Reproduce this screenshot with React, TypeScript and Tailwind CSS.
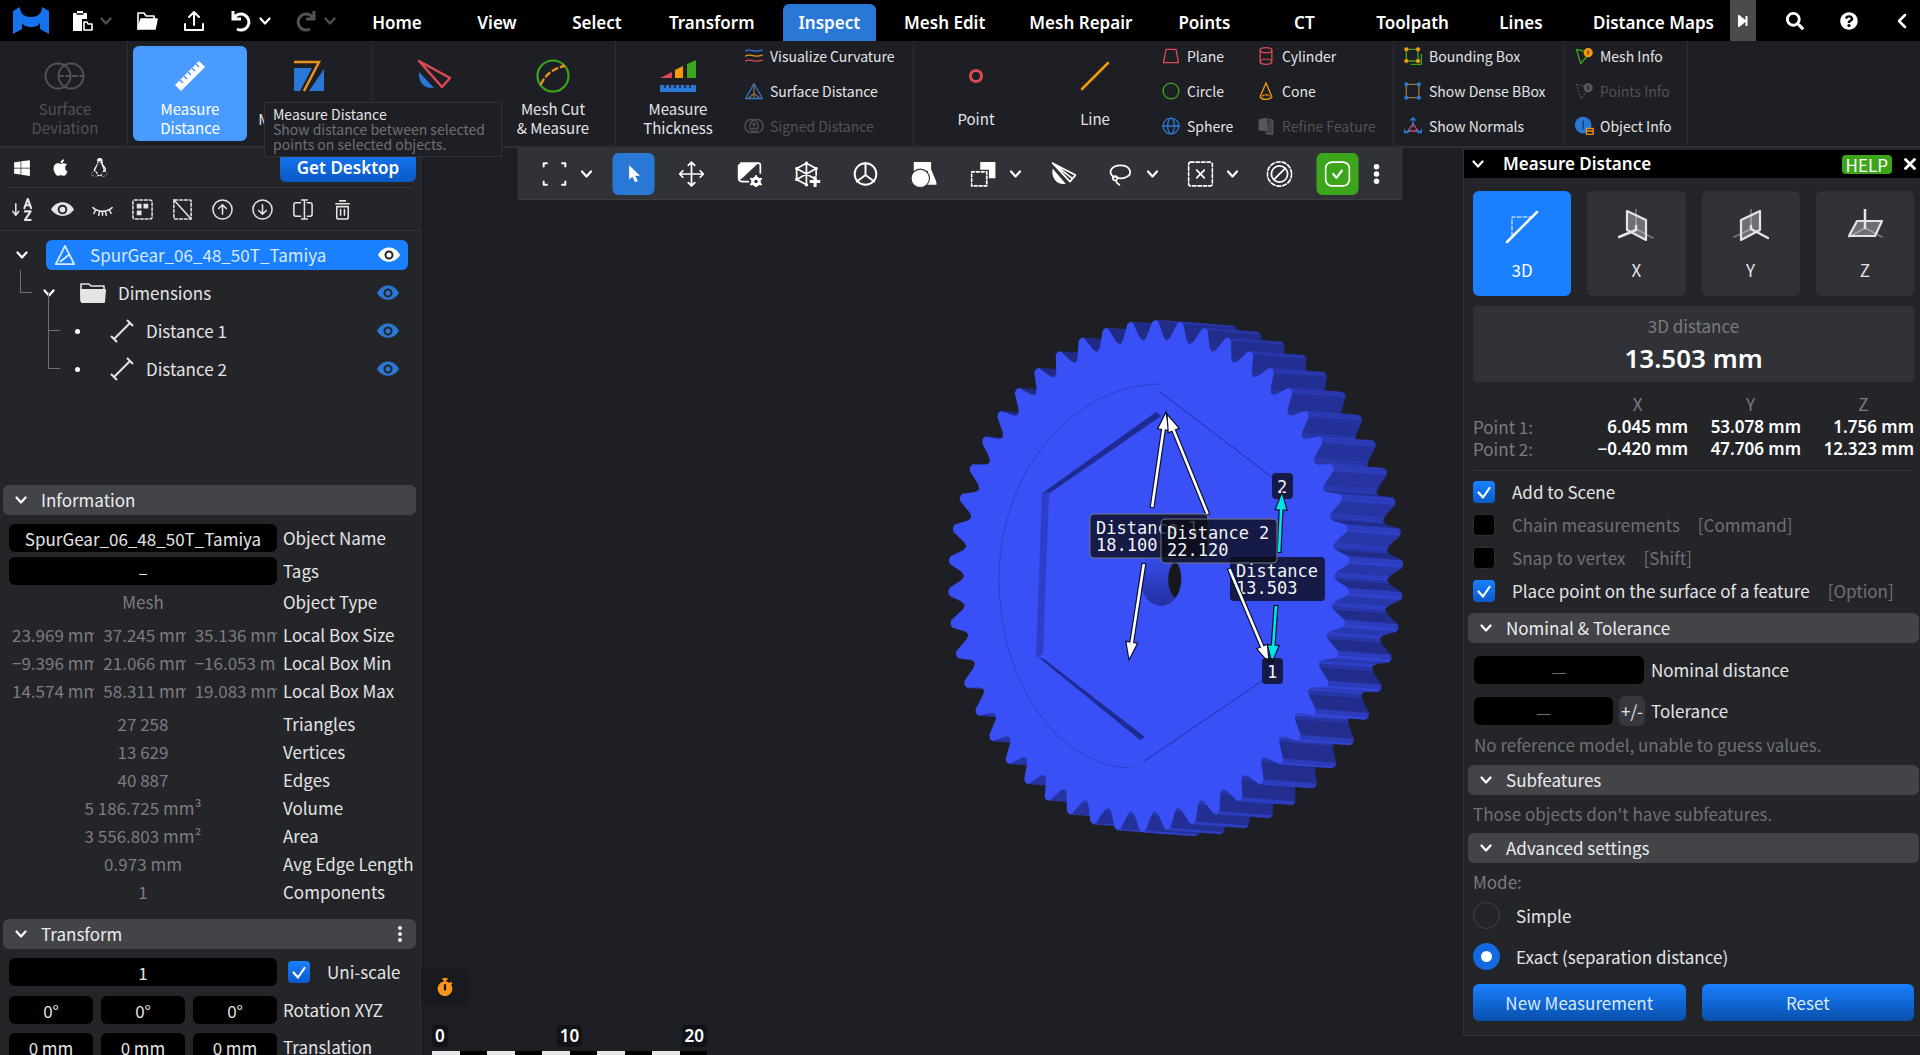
import type { ReactNode } from 'react'
import { FaApple, FaLinux, FaWindows, FaSearch, FaQuestionCircle, FaStopwatch } from 'react-icons/fa'

const UI = "font-['Noto_Sans_CJK_SC',sans-serif]"
const HEAD = "font-['Noto_Sans',sans-serif] font-semibold"

type IconProps = { children: ReactNode; size?: string; box?: string; className?: string }

const Icon = ({ children, size = 'size-7', box = '0 0 24 24', className = '' }: IconProps) => (
  <svg
    viewBox={box}
    className={`shrink-0 ${size} ${className}`}
    fill="none"
    stroke="currentColor"
    strokeWidth="1.6"
    strokeLinecap="round"
    strokeLinejoin="round"
    aria-hidden="true"
  >
    {children}
  </svg>
)

const Chevron = ({ className = 'text-white' }: { className?: string }) => (
  <Icon size="size-3" box="0 0 12 12" className={className}>
    <path d="M1.5 3.5 6 8.5l4.5-5" strokeWidth="2.2" />
  </Icon>
)

/* ---------- top bar ---------- */

const tabs = [
  'Home', 'View', 'Select', 'Transform', 'Inspect', 'Mesh Edit', 'Mesh Repair',
  'Points', 'CT', 'Toolpath', 'Lines', 'Distance Maps',
]

const TopBar = () => (
  <header className="flex h-[41px] bg-black text-white">
    <div className="flex w-[353px] shrink-0 items-center pl-3">
      <svg viewBox="0 0 38 28" className="h-7 w-[38px]" aria-hidden="true">
        <path
          d="M1 4 8 0c0 7 5 10 11 10S30 7 30 0l7 4v23l-9-5v-6c-2 3-5 4-9 4s-7-1-9-4v6l-9 5z"
          fill="#1673ee"
        />
      </svg>
      <button aria-label="New" className="ml-5 flex items-center gap-1.5">
        <Icon size="size-6">
          <path d="M3 4h4V2h6v2h4v6h-5v12H3z" fill="currentColor" stroke="none" />
          <path d="M7 5h6" stroke="#000" strokeWidth="1.4" />
          <path d="M14 13h3l1 2h4v6h-8z" />
        </Icon>
        <Chevron className="text-neutral-600" />
      </button>
      <button aria-label="Open" className="ml-[23px]">
        <Icon size="size-6">
          <path d="M3 20V4h6l2 3h8v3" />
          <path d="M6 10h16l-2 10H3z" fill="currentColor" />
        </Icon>
      </button>
      <button aria-label="Export" className="ml-[23px]">
        <Icon size="size-6">
          <path d="M12 16V3M7 8l5-5 5 5M3 15v6h18v-6" strokeWidth="2" />
        </Icon>
      </button>
      <button aria-label="Undo" className="ml-[23px] flex items-center gap-1.5">
        <Icon size="size-6">
          <path d="M4 2v8h8M5 9a8 8 0 1 1 3 11" strokeWidth="3" strokeLinecap="butt" strokeLinejoin="miter" />
        </Icon>
        <Chevron />
      </button>
      <button aria-label="Redo" className="ml-[23px] flex items-center gap-1.5 text-neutral-600" disabled>
        <Icon size="size-6">
          <path d="M20 2v8h-8M19 9a8 8 0 1 0-3 11" strokeWidth="3" strokeLinecap="butt" strokeLinejoin="miter" />
        </Icon>
        <Chevron className="text-neutral-600" />
      </button>
    </div>
    <nav className={`flex flex-1 items-end gap-3 overflow-hidden text-[17px] ${HEAD}`}>
      {tabs.map((t) => (
        <button
          key={t}
          className={`h-[37px] min-w-[88px] shrink-0 rounded-t-md px-4 ${t === 'Inspect' ? 'bg-[#2a78d6]' : ''}`}
        >
          {t}
        </button>
      ))}
    </nav>
    <button aria-label="More tabs" className="flex w-[26px] shrink-0 items-center justify-center bg-[#4b4b4b]">
      <Icon size="size-4" box="0 0 16 16">
        <path d="M4 3v10l6-5zM11.5 3v10" fill="currentColor" strokeWidth="2" strokeLinecap="butt" />
      </Icon>
    </button>
    <div className="flex w-[164px] shrink-0 items-center justify-end gap-9 pr-2.5">
      <button aria-label="Search"><FaSearch className="size-[18px]" /></button>
      <button aria-label="Help"><FaQuestionCircle className="size-[18px]" /></button>
      <button aria-label="Collapse ribbon">
        <Icon size="size-4" box="0 0 16 16"><path d="M11 2 5 8l6 6" strokeWidth="2.5" /></Icon>
      </button>
    </div>
  </header>
)

/* ---------- ribbon ---------- */

const Group = ({ children }: { children: ReactNode }) => (
  <div className="flex gap-[5px] border-r border-[#2d2e33] px-[5px] pt-[5px]">{children}</div>
)

type BigProps = { label: ReactNode; name?: string; icon: ReactNode; active?: boolean; disabled?: boolean }

const Big = ({ label, name, icon, active, disabled }: BigProps) => (
  <button
    aria-label={name}
    disabled={disabled}
    className={`flex h-[95px] w-[114px] flex-col items-center rounded-md pt-3 text-[15px] leading-[19px] ${
      active ? 'bg-[#4a9bff] text-white' : disabled ? 'text-[#515257]' : 'text-[#e4e4e6]'
    }`}
  >
    {icon}
    <span className="mt-px flex h-[50px] items-center text-center">{label}</span>
  </button>
)

const Small = ({ label, icon, disabled }: { label: string; icon: ReactNode; disabled?: boolean }) => (
  <button
    disabled={disabled}
    className={`flex h-[35px] items-center gap-1.5 text-sm whitespace-nowrap ${disabled ? 'text-[#515257]' : 'text-[#e4e4e6]'}`}
  >
    <Icon size="size-5">{icon}</Icon>
    {label}
  </button>
)

const Column = ({ children, className = '' }: { children: ReactNode; className?: string }) => (
  <div className={`-mt-2 flex flex-col ${className}`}>{children}</div>
)

const Ribbon = () => (
  <div className="flex h-[107px] border-b-2 border-[#2d2e33] bg-[#1e1f24]">
    <div className="flex border-r border-[#2d2e33] pt-[5px] pr-[5px] pl-2">
      <Big
        disabled
        label={<>Surface<br />Deviation</>}
        icon={
          <Icon size="h-9 w-11" box="0 0 44 36">
            <circle cx="15" cy="18" r="12.5" strokeWidth="2" />
            <circle cx="28" cy="18" r="12.5" strokeWidth="2" />
            <path d="M16 18h24" strokeDasharray="4 3" strokeWidth="2" />
          </Icon>
        }
      />
    </div>
    <Group>
      <Big
        active
        label={<>Measure<br />Distance</>}
        icon={
          <Icon size="size-9" box="0 0 36 36">
            <path d="M3 27 27 3l6 6L9 33z" fill="#fff" stroke="none" />
            <path d="m8 22 3 3m1-7 3 3m1-7 3 3m1-7 3 3m1-7 3 3" stroke="#4a9bff" strokeWidth="1.5" strokeLinecap="butt" />
          </Icon>
        }
      />
      <Big
        label="Measure Angle"
        icon={
          <Icon size="size-9" box="0 0 36 36">
            <path d="M3 10h18L9 33H3zM33 11v22H18z" fill="#2a78d6" stroke="none" />
            <path d="M3 4h26L14 33" stroke="#1e1f24" strokeWidth="5" strokeLinecap="butt" strokeLinejoin="miter" />
            <path d="M3 4h25L13 33" stroke="#e8931d" strokeWidth="2.5" strokeLinecap="butt" strokeLinejoin="miter" />
          </Icon>
        }
      />
    </Group>
    <Group>
      <Big
        name="Measure section"
        label=""
        icon={
          <Icon size="size-9" box="0 0 36 36">
            <path d="M3 14 18 30C8 31 2 24 3 14z" fill="#2a78d6" stroke="none" />
            <path d="m3 3 31 17-8 9z" stroke="#dd4954" strokeWidth="2.5" />
          </Icon>
        }
      />
      <Big
        label={<>Mesh Cut<br />&amp; Measure</>}
        icon={
          <Icon size="size-9" box="0 0 36 36">
            <circle cx="18" cy="18" r="15.5" stroke="#3da51b" strokeWidth="2.2" />
            <path d="M6 26C11 16 18 11 29 8" stroke="#e8931d" strokeWidth="2.4" strokeDasharray="5 4" />
          </Icon>
        }
      />
    </Group>
    <Group>
      <Big
        label={<>Measure<br />Thickness</>}
        icon={
          <Icon size="size-9" box="0 0 36 36">
            <path d="m0 20 12-6v6z" fill="#dd4954" stroke="none" />
            <path d="M15 12l8-4v12h-8z" fill="#f79a0a" stroke="none" />
            <path d="M27 6l9-4v18h-9z" fill="#3da51b" stroke="none" />
            <path d="M0 27h36v7H0z" fill="#2a78d6" stroke="none" />
            <path d="M5 27v3m5-3v3m5-3v3m5-3v3m5-3v3m5-3v3" stroke="#1e1f24" strokeWidth="1.5" strokeLinecap="butt" />
          </Icon>
        }
      />
      <Column className="w-[168px] pl-1">
        <Small
          label="Visualize Curvature"
          icon={
            <>
              <path d="M2 6c5-4 8 3 20-1" stroke="#2a78d6" />
              <path d="M2 12c5-4 8 3 20-1" stroke="#e8931d" />
              <path d="M2 18c5-4 8 3 20-1" stroke="#dd4954" />
            </>
          }
        />
        <Small
          label="Surface Distance"
          icon={<><path d="M12 3 2 21h20z" stroke="#2a78d6" /><path d="M12 4v15M6 20l6-5 6 5" stroke="#8d6b3c" /></>}
        />
        <Small
          disabled
          label="Signed Distance"
          icon={<><circle cx="9" cy="12" r="8" /><circle cx="15" cy="12" r="8" /><path d="M10 10h4M12 8v4M10 15h4" /></>}
        />
      </Column>
    </Group>
    <Group>
      <Big
        label="Point"
        icon={<Icon size="size-9" box="0 0 36 36"><circle cx="18" cy="18" r="5.5" stroke="#dd4954" strokeWidth="3" /></Icon>}
      />
      <Big
        label="Line"
        icon={<Icon size="size-9" box="0 0 36 36"><path d="M5 31 31 5" stroke="#f79a0a" strokeWidth="2.5" /></Icon>}
      />
      <Column className="w-[94px] pl-1">
        <Small label="Plane" icon={<path d="M6 4h12l3 16H3z" stroke="#dd4954" />} />
        <Small label="Circle" icon={<circle cx="12" cy="12" r="9.5" stroke="#3da51b" />} />
        <Small
          label="Sphere"
          icon={
            <g stroke="#2a78d6">
              <circle cx="12" cy="12" r="9.5" />
              <ellipse cx="12" cy="12" rx="4" ry="9.5" />
              <path d="M2 12h20" />
            </g>
          }
        />
      </Column>
      <Column className="w-[132px]">
        <Small
          label="Cylinder"
          icon={
            <g stroke="#dd4954">
              <ellipse cx="12" cy="5" rx="7" ry="3" />
              <path d="M5 5v14c0 4 14 4 14 0V5" />
              <path d="M5 18c2-3 12-3 14 0" strokeDasharray="2 2" />
            </g>
          }
        />
        <Small
          label="Cone"
          icon={<g stroke="#f79a0a"><path d="M12 2 5 19c2 4 12 4 14 0z" /><path d="M8 18c2-2 6-2 8 0" strokeDasharray="2 2" /></g>}
        />
        <Small
          disabled
          label="Refine Feature"
          icon={<><path d="M3 4l11-2v17L3 17z" fill="#55565b" stroke="none" /><path d="M16 4l4 1v17l-8-1" fill="#44454a" stroke="#55565b" /></>}
        />
      </Column>
    </Group>
    <Group>
      <Column className="w-[160px] pl-1">
        <Small
          label="Bounding Box"
          icon={
            <>
              <path d="M4 4h14v14H4zM22 10v12H10" stroke="#3da51b" />
              <path d="M4 4h.1M18 4h.1M4 18h.1M18 18h.1" stroke="#f79a0a" strokeWidth="5" />
            </>
          }
        />
        <Small
          label="Show Dense BBox"
          icon={
            <>
              <path d="M4 4h15v16H4z" stroke="#a5703a" />
              <path d="M4 4h.1M19 4h.1M4 20h.1M19 20h.1" stroke="#2a78d6" strokeWidth="5" />
            </>
          }
        />
        <Small
          label="Show Normals"
          icon={
            <>
              <path d="M12 9 6 18h12z" stroke="#dd4954" />
              <path d="M12 13V3M9 5l3-3 3 3M9 17l-7 3M2 16v4h4M15 17l7 3M22 16v4h-4" stroke="#2a78d6" />
            </>
          }
        />
      </Column>
    </Group>
    <Group>
      <Column className="w-[112px] pl-1">
        <Small
          label="Mesh Info"
          icon={
            <>
              <path d="M3 4 8 21l8-9M3 4l8 2" stroke="#3da51b" />
              <circle cx="17" cy="8" r="5.5" fill="#f79a0a" stroke="none" />
              <path d="M17 6v4" stroke="#5c3b05" />
            </>
          }
        />
        <Small
          disabled
          label="Points Info"
          icon={
            <>
              <path d="M3 4 8 21l8-9M3 4l8 2" strokeDasharray="1 3" />
              <circle cx="17" cy="8" r="5.5" fill="#55565b" stroke="none" />
              <path d="M17 6v4" stroke="#1e1f24" />
            </>
          }
        />
        <Small
          label="Object Info"
          icon={
            <>
              <circle cx="11" cy="11" r="10" fill="#2a78d6" stroke="none" />
              <path d="M11 6v9" stroke="#123a6b" />
              <path d="M15 15h8v7h-8zM15 18h8" stroke="#e8931d" fill="#1e1f24" />
            </>
          }
        />
      </Column>
    </Group>
  </div>
)

const Tooltip = () => (
  <div
    role="tooltip"
    className="absolute top-[102px] left-[264px] z-20 w-[238px] border border-[#303136] bg-[#1e1f24] px-2 py-1 text-sm leading-[15px] text-[#e4e4e6]"
  >
    Measure Distance
    <p className="text-[#6f7075]">Show distance between selected points on selected objects.</p>
  </div>
)

/* ---------- shared controls ---------- */

const Section = ({ title, menu }: { title: string; menu?: boolean }) => (
  <button className="flex h-[30px] w-full items-center gap-3.5 rounded-md bg-[#424448] pr-2 pl-3 text-left text-[#ececee]">
    <Chevron />
    {title}
    {menu && (
      <Icon size="size-4" box="0 0 16 16" className="ml-auto">
        <path d="M8 2h.01M8 8h.01M8 14h.01" strokeWidth="4" />
      </Icon>
    )}
  </button>
)

type CheckProps = { label: string; hint?: string; checked?: boolean }

const Check = ({ label, hint, checked }: CheckProps) => (
  <label className={`flex h-[33px] items-center whitespace-nowrap ${checked ? 'text-[#e4e4e6]' : 'text-[#6f7075]'}`}>
    <span className="relative flex size-[22px] shrink-0">
      <input
        type="checkbox"
        defaultChecked={checked}
        className="peer size-[22px] appearance-none rounded border border-[#2d2e33] bg-black checked:border-0 checked:bg-linear-to-b checked:from-[#1a80ff] checked:to-[#0a5acc]"
      />
      <Icon size="size-[22px]" box="0 0 22 22" className="pointer-events-none absolute inset-0 hidden text-white peer-checked:block">
        <path d="m5.5 11.5 4.5 5L16.5 7" strokeWidth="2.2" />
      </Icon>
    </span>
    <span className="ml-[17px]">{label}</span>
    {hint && <span className="ml-[18px] text-[#6f7075]">{hint}</span>}
  </label>
)

const field = 'h-7 w-full min-w-0 rounded-md bg-black text-center text-[#e4e4e6] placeholder:text-[#6f7075]'

/* ---------- left panel ---------- */

const Eye = ({ className = 'mr-[21px] text-[#2a78d6]' }: { className?: string }) => (
  <Icon size="h-4 w-[22px]" box="0 0 22 16" className={`ml-auto ${className}`}>
    <path d="M0 8c5-10 17-10 22 0-5 9-17 9-22 0z" fill="currentColor" stroke="none" />
    <circle cx="11" cy="8" r="3.5" stroke="#242529" strokeWidth="2" fill="currentColor" />
  </Icon>
)

const treeTools: [string, ReactNode][] = [
  ['Sort', <><path d="M5 6v12M2 14l3 4 3-4" /><path d="M14 10.5 17.5 1 21 10.5M15.5 7.5h4M14.5 14h6l-6 9h6" strokeWidth="2.2" /></>],
  ['Show all', <><path d="M0 12C6 2 18 2 24 12 18 21 6 21 0 12z" fill="currentColor" stroke="none" /><circle cx="12" cy="12" r="4" stroke="#242529" strokeWidth="2" /></>],
  ['Hide all', <path d="M2 10c5 5 15 5 20 0M5 12.5 3 16M9 14l-1 4M12 14v4M15 14l1 4M19 12.5l2 3.5" />],
  ['Select all', <><rect x="2" y="2" width="20" height="20" rx="2" strokeDasharray="3 2" /><path d="M6 6h5v5H6zM13 6h5v5h-5zM6 13h5v5H6z" fill="currentColor" stroke="none" /></>],
  ['Unselect', <><rect x="3" y="2" width="18" height="20" rx="1" strokeDasharray="3 2" /><path d="m3 2 18 20" /></>],
  ['Previous', <><circle cx="12" cy="12" r="10" /><path d="M12 17V7M8 11l4-4 4 4" /></>],
  ['Next', <><circle cx="12" cy="12" r="10" /><path d="M12 7v10M8 13l4 4 4-4" /></>],
  ['Rename', <><path d="M10 5H5Q3 5 3 7v10q0 2 2 2h5M17 5h3q2 0 2 2v10q0 2-2 2h-3M14 2v20M11 2h6M11 22h6" /></>],
  ['Delete', <><path d="M5 6h14M9 3h6M6 9h12v11q0 2-2 2H8q-2 0-2-2zM10 12v6M14 12v6" /></>],
]

const DistanceIcon = () => (
  <Icon size="size-7" box="0 0 28 28">
    <path d="M6 22 22 6M3 19l6 6M19 3l6 6" strokeWidth="2" strokeLinecap="butt" />
  </Icon>
)

const facts = [
  ['27 258', 'Triangles'],
  ['13 629', 'Vertices'],
  ['40 887', 'Edges'],
  ['5 186.725 mm³', 'Volume'],
  ['3 556.803 mm²', 'Area'],
  ['0.973 mm', 'Avg Edge Length'],
  ['1', 'Components'],
]

const boxes = [
  { label: 'Local Box Size', values: ['23.969 mm', '37.245 mm', '35.136 mm'] },
  { label: 'Local Box Min', values: ['−9.396 mm', '21.066 mm', '−16.053 mm'] },
  { label: 'Local Box Max', values: ['14.574 mm', '58.311 mm', '19.083 mm'] },
]

const row = 'grid grid-cols-[268px_1fr] items-center gap-x-1.5 whitespace-nowrap'

const Triple = ({ label, value }: { label: string; value: string }) => (
  <div className={row}>
    <div className="grid grid-cols-3 gap-2">
      {['X', 'Y', 'Z'].map((a) => (
        <input key={a} aria-label={`${label} ${a}`} defaultValue={value} className={field} />
      ))}
    </div>
    <span>{label}</span>
  </div>
)

const LeftPanel = () => (
  <aside className="w-[421px] shrink-0 overflow-hidden border-r border-[#2d2e33] bg-[#242529] text-[17px] text-[#e4e4e6]">
    <div className="mx-2 flex h-10 items-center border-b border-[#34353a] pl-[5px] text-white">
      <FaWindows className="size-[18px]" />
      <FaApple className="ml-5 size-[19px]" />
      <FaLinux className="ml-5 size-[19px]" />
      <button className={`-mr-1 ml-auto h-[29px] w-[136px] rounded-md bg-linear-to-b from-[#1677f2] to-[#0a58c4] leading-[29px] ${HEAD}`}>
        Get Desktop
      </button>
    </div>
    <div className="flex h-[43px] items-center gap-[17px] border-b border-[#34353a] pl-[11px]">
      {treeTools.map(([name, icon]) => (
        <button key={name} aria-label={name}>
          <Icon size="size-[23px]">{icon}</Icon>
        </button>
      ))}
    </div>
    <div className="flex h-[254px] flex-col gap-2 pt-[9px] pl-4">
      <div className="flex h-[30px] items-center gap-[18px]">
        <Chevron />
        <div className="flex h-[30px] w-[362px] items-center rounded-md bg-[#1a80ff] px-2 text-[#d8e9ff]">
          <Icon size="size-[22px]">
            <path d="M12 2 2 22h20zM7 19l9-7" strokeWidth="2" />
          </Icon>
          <span className="ml-3.5">SpurGear_06_48_50T_Tamiya</span>
          <Eye className="text-white" />
        </div>
      </div>
      <div className="relative flex h-[30px] items-center pl-[27px]">
        <span className="absolute -top-2 left-1 h-[23px] w-3 border-b border-l border-[#6f7075]" />
        <Chevron />
        <Icon size="h-6 w-7" box="0 0 28 24" className="ml-6">
          <path d="M2 20V3h8l2 2h13v14" />
          <path d="M1 9q0-1 1-1h24q1 0 1 1l-1 12q0 1-1 1H3q-1 0-1-1z" fill="currentColor" stroke="none" />
        </Icon>
        <span className="ml-[11px]">Dimensions</span>
        <Eye />
      </div>
      {['Distance 1', 'Distance 2'].map((d) => (
        <div key={d} className="relative flex h-[30px] items-center pl-[59px]">
          <span className="absolute -top-6 left-8 h-[39px] w-3 border-b border-l border-[#6f7075]" />
          <span className="size-[5px] rounded-full bg-white" />
          <span className="ml-7"><DistanceIcon /></span>
          <span className="ml-2.5">{d}</span>
          <Eye />
        </div>
      ))}
    </div>
    <div className="px-[3px] pr-1"><Section title="Information" /></div>
    <div className="px-[9px] pt-[9px]">
      <label className={row}>
        <input defaultValue="SpurGear_06_48_50T_Tamiya" className={field} />
        Object Name
      </label>
      <label className={`mt-[5px] ${row}`}>
        <input defaultValue="–" className={field} />
        Tags
      </label>
      <div className={`mt-[3px] mb-[5px] h-7 ${row}`}>
        <span className="text-center text-[#7b7c81]">Mesh</span>
        <span>Object Type</span>
      </div>
      {boxes.map((b) => (
        <div key={b.label} className={`h-7 ${row}`}>
          <div className="grid grid-cols-3 gap-1.5 text-[#7b7c81]">
            {b.values.map((v) => (
              <span key={v} className="overflow-hidden pl-[3px]">{v}</span>
            ))}
          </div>
          <span>{b.label}</span>
        </div>
      ))}
      <div className="mt-[5px] mb-[13px]">
        {facts.map(([v, l]) => (
          <div key={l} className={`h-7 ${row}`}>
            <span className="text-center text-[#7b7c81]">{v}</span>
            <span>{l}</span>
          </div>
        ))}
      </div>
    </div>
    <div className="px-[3px] pr-1"><Section title="Transform" menu /></div>
    <div className="flex flex-col gap-[9px] px-[9px] pt-2">
      <div className="flex h-[30px] items-center gap-[11px]">
        <div className="w-[268px]"><input aria-label="Scale" defaultValue="1" className={field} /></div>
        <Check label="Uni-scale" checked />
      </div>
      <Triple label="Rotation XYZ" value="0°" />
      <Triple label="Translation" value="0 mm" />
    </div>
  </aside>
)

/* ---------- viewport ---------- */

type Pt = [number, number]

const TEETH = 50
const CX = 1149
const CY = 575
const DX = 53
const DY = 4

const rim = (angle: number, r: number): Pt => {
  const dy = Math.sin(angle) * 256 * r
  return [CX + Math.cos(angle) * 201 * r - dy * 0.025, CY + dy]
}

const tooth: Pt[] = [[-0.47, 0.922], [-0.36, 0.934], [-0.12, 0.993], [0, 1], [0.12, 0.993], [0.36, 0.934], [0.47, 0.922]]

const profile: Pt[] = Array.from({ length: TEETH }).flatMap((_, i) =>
  tooth.map(([f, r]) => rim(((i + 0.5 + f) / TEETH) * Math.PI * 2, r)),
)

const toPoints = (pts: Pt[]) => pts.map(([x, y]) => `${x.toFixed(1)},${y.toFixed(1)}`).join(' ')

// side walls, drawn left to right so nearer ones cover the rest;
// tooth tips catch the light, flanks fall into shade
const walls = profile
  .map((a, i) => {
    const b = profile[(i + 1) % profile.length]
    const len = Math.hypot(b[0] - a[0], b[1] - a[1])
    const nx = (b[1] - a[1]) / len
    const ny = -(b[0] - a[0]) / len
    const mx = (a[0] + b[0]) / 2 - CX
    const my = (a[1] + b[1]) / 2 - CY
    const out = Math.max(0, (nx * mx + ny * my) / Math.hypot(mx, my))
    const light = Math.max(0, Math.min(1, 0.32 + out * out * 0.5 + ny * 0.14))
    const fill = `rgb(${Math.round(22 + light * 32)} ${Math.round(28 + light * 46)} ${Math.round(90 + light * 140)})`
    return { a, b, fill, facing: nx * DX + ny * DY > 0 }
  })
  .filter((w) => w.facing)
  .sort((p, q) => p.a[0] + p.b[0] - q.a[0] - q.b[0])

type ArrowProps = { from: Pt; to: Pt; color?: string }

const Dimension = ({ from, to, color = '#fff' }: ArrowProps) => {
  const len = Math.hypot(to[0] - from[0], to[1] - from[1])
  const ux = (to[0] - from[0]) / len
  const uy = (to[1] - from[1]) / len
  const at = (back: number, side: number): Pt => [to[0] - ux * back - uy * side, to[1] - uy * back + ux * side]
  const [ex, ey] = at(18, 0)
  return (
    <g>
      <line x1={from[0]} y1={from[1]} x2={ex} y2={ey} stroke="#0c1130" strokeWidth="5" />
      <polygon points={toPoints([at(18, 6), to, at(18, -6)])} fill={color} stroke="#0c1130" strokeWidth="1.2" />
      <line x1={from[0] + ux} y1={from[1] + uy} x2={ex + ux} y2={ey + uy} stroke={color} strokeWidth="2.6" />
    </g>
  )
}

const mono = "font-['DejaVu_Sans_Mono',monospace] text-[17px]"

type TagProps = { x: number; y: number; w: number; lines: string[]; outlined?: boolean }

const Tag = ({ x, y, w, lines, outlined }: TagProps) => (
  <g>
    <rect x={x} y={y} width={w} height="44" rx="4" fill="#0b0c14" fillOpacity="0.78" stroke={outlined ? '#77787c' : 'none'} />
    {lines.map((l, i) => (
      <text key={l} x={x + 6} y={y + 20 + i * 17} fill="#f2f2f4" className={mono}>
        {l}
      </text>
    ))}
  </g>
)

const Pin = ({ x, y, n }: { x: number; y: number; n: string }) => (
  <g>
    <rect x={x - 10} y={y - 13} width="21" height="26" rx="4" fill="#0b0c14" fillOpacity="0.78" />
    <text x={x} y={y + 7} textAnchor="middle" fill="#f2f2f4" className={mono}>{n}</text>
  </g>
)

const Gear = () => (
  <svg viewBox="421 147 1042 907" className="absolute inset-0 h-full w-full" role="img" aria-label="Spur gear model">
    <defs>
      <linearGradient id="bore" x1="0" y1="0" x2="0" y2="1">
        <stop offset="0" stopColor="#3850f5" />
        <stop offset="1" stopColor="#2430a0" />
      </linearGradient>
    </defs>
    {walls.map((w, i) => (
      <polygon
        key={i}
        points={toPoints([w.a, w.b, [w.b[0] + DX, w.b[1] + DY], [w.a[0] + DX, w.a[1] + DY]])}
        fill={w.fill}
        stroke={w.fill}
        strokeWidth="0.5"
      />
    ))}
    <polygon points={toPoints(profile)} fill="#3850f5" />
    <path d="M1162 383C1070 383 999 475 999 577c0 105 60 190 134 190" fill="none" stroke="#2c3fc6" strokeWidth="1" />
    <path d="M1160 391 1273 477M1262 680l-119 81" stroke="#2230a0" strokeWidth="1" />
    <path d="m1156 411 5 4-114 79-6-1zM1038 656l6 2 101 78-5 3z" fill="#1f2b94" />
    <path d="m1042 492 7-1-6 162-7 4z" fill="#2d3ecb" />
    <ellipse cx="1161" cy="577" rx="21" ry="28" fill="url(#bore)" />
    <path d="M1175 560c8 7 8 28 0 37-9-8-9-29 0-37z" fill="#17181c" />
    <Dimension from={[1152, 507]} to={[1166, 411]} />
    <Dimension from={[1144, 562]} to={[1129, 659]} />
    <Dimension from={[1208, 514]} to={[1167, 413]} />
    <Pin x={1282} y={485} n="2" />
    <Dimension from={[1279, 552]} to={[1282, 491]} color="#00e5e5" />
    <Tag x={1090} y={513} w={118} lines={['Distance 1', '18.100']} outlined />
    <Tag x={1230} y={556} w={95} lines={['Distance', '13.503']} />
    <Tag x={1161} y={518} w={116} lines={['Distance 2', '22.120']} outlined />
    <Dimension from={[1229, 567]} to={[1269, 662]} />
    <Dimension from={[1276, 604]} to={[1272, 662]} color="#00e5e5" />
    <Pin x={1272} y={670} n="1" />
  </svg>
)

const ScaleBar = () => (
  <div className="absolute bottom-0 left-[11px] w-[275px] text-[17px] text-white">
    <div className={`grid grid-cols-[1fr_auto_1fr] pb-1 leading-[22px] ${HEAD}`}>
      <span className="justify-self-start rounded bg-[#121316] px-[3px]">0</span>
      <span className="rounded bg-[#121316] px-[3px]">10</span>
      <span className="justify-self-end rounded bg-[#121316] px-[3px]">20</span>
    </div>
    <div className="grid h-1 grid-cols-10">
      {Array.from({ length: 10 }, (_, i) => (
        <span key={i} className={i % 2 ? 'bg-black' : 'bg-[#e8e4e6]'} />
      ))}
    </div>
  </div>
)

const Viewport = () => (
  <main className="relative min-w-0 flex-1 overflow-hidden bg-[#1e1f24]">
    <Gear />
    <button aria-label="Timer" className="absolute bottom-[50px] left-0 flex h-[37px] w-[47px] items-center justify-center rounded-r bg-[#191a1d]">
      <FaStopwatch className="size-[18px] text-[#f7951d]" />
    </button>
    <ScaleBar />
  </main>
)

type Tool = { name: string; w: string; icon: ReactNode; menu?: boolean; look?: string }

const tools: Tool[] = [
  { name: 'Fit view', w: 'w-[91px]', menu: true, icon: <path d="M2 5V2h3M19 2h3v3M22 19v3h-3M5 22H2v-3" strokeWidth="1.8" /> },
  { name: 'Pointer', w: 'w-[42px]', look: 'mr-2 bg-[#2a78d6]', icon: <path d="M8 4v13l3-2.5 2.5 5 2.500-1-2.500-5h4.500z" fill="currentColor" stroke="none" /> },
  { name: 'Move', w: 'w-[58px]', icon: <path d="M12 1v22M1 12h22M9 4l3-3 3 3M9 20l3 3 3-3M4 9l-3 3 3 3M20 9l3 3-3 3" /> },
  {
    name: 'Display', w: 'w-[58px]',
    icon: (
      <>
        <path d="M4 2h16q2 0 2 2v7M2 4v12q0 3 3 3h6" />
        <path d="M4 2h16L4 17q-2 0-2-2V4q0-2 2-2z" fill="currentColor" stroke="none" />
        <circle cx="18" cy="19" r="3" strokeWidth="3" />
        <path d="M18 14v10M13.5 16.5l9 5M22.5 16.5l-9 5" strokeWidth="2" />
        <circle cx="18" cy="19" r="1.6" fill="#303237" stroke="none" />
      </>
    ),
  },
  {
    name: 'Add mesh', w: 'w-[58px]',
    icon: (
      <>
        <path d="M11 2 2 7v10l9 5M11 2l9 5v6M2 7l18 10M20 7 2 17M11 2v20" />
        <path d="M11 2h.1M2 7h.1M20 7h.1M2 17h.1M11 22h.1" strokeWidth="3" />
        <path d="M19 14v10M14 19h10" strokeWidth="2.8" strokeLinecap="butt" />
      </>
    ),
  },
  { name: 'Orbit', w: 'w-[58px]', icon: <><circle cx="12" cy="12" r="10" strokeWidth="1.8" /><path d="M12 2v11L4 19M12 13l8 6" strokeWidth="1.8" /></> },
  { name: 'Primitives', w: 'w-[58px]', icon: <><path d="M3 1h16v8H3zM18 5l7 17H11z" fill="currentColor" stroke="none" /><circle cx="9" cy="16" r="8.5" fill="currentColor" stroke="#303237" strokeWidth="1" /></> },
  { name: 'Layers', w: 'w-[86px]', menu: true, icon: <><path d="M9 1h14v15h-6V8H9z" fill="currentColor" stroke="none" /><rect x="1" y="10" width="14" height="13" strokeDasharray="2.5 2" /></> },
  { name: 'Clip plane', w: 'w-[50px]', icon: <><path d="m2 7 12 14C7 23 0 16 2 7z" fill="currentColor" stroke="none" /><path d="m2 2 21 11-5 6zM2 2l18 14" /></> },
  { name: 'Lasso', w: 'w-[89px]', menu: true, icon: <><path d="M6 15C0 11 3 4 12 4s12 8 5 11c-4 2-7 1-9 0" /><circle cx="7" cy="16" r="2" /><path d="M8 18c0 3 2 3 3 4" /></> },
  { name: 'Unselect', w: 'w-[70px]', menu: true, icon: <><rect x="1" y="1" width="22" height="22" rx="2" strokeDasharray="3 2" /><path d="m8.5 8.5 7 7M15.5 8.5l-7 7" /></> },
  { name: 'Disable', w: 'w-[64px]', icon: <><circle cx="12" cy="12" r="11.2" strokeDasharray="3.5 2" /><circle cx="12" cy="12" r="7.5" /><path d="m7 17 10-10" /></> },
  { name: 'Confirm', w: 'w-[42px]', look: 'ml-[5px] bg-[#3da51b]', icon: <><rect x="1" y="1" width="22" height="22" rx="6" /><path d="m8 12 3 3.5L16 9" strokeWidth="2" /></> },
]

const Toolbar = () => (
  <div className="absolute top-0 left-1/2 z-10 flex h-[52px] -translate-x-1/2 items-center border-b border-[#3a3c40] bg-[#303237] pr-2 pl-1 text-white">
    {tools.map((t) => (
      <button
        key={t.name}
        aria-label={t.name}
        className={`flex h-[42px] shrink-0 items-center justify-center gap-[13px] rounded-md ${t.w} ${t.look ?? ''}`}
      >
        <Icon size="size-[26px]">{t.icon}</Icon>
        {t.menu && <Chevron />}
      </button>
    ))}
    <button aria-label="More tools" className="flex w-9 justify-center">
      <Icon size="size-[22px]">
        <path d="M12 4h.01M12 12h.01M12 20h.01" strokeWidth="6" />
      </Icon>
    </button>
  </div>
)

/* ---------- right panel ---------- */

const modes = [
  { name: '3D', icon: <><path d="M8 27V8h18" strokeDasharray="4 2" strokeWidth="1" /><path d="M3 33 33 3" strokeWidth="2.5" /></> },
  { name: 'X', icon: <><path d="M18 0v20l17 9" stroke="#77787d" /><path d="m9 2 19 9v20l-19-10z" fill="#fff" fillOpacity="0.3" strokeWidth="2.2" /><path d="M18 17v4L1 28" strokeWidth="2.5" /></> },
  { name: 'Y', icon: <><path d="M18 0v20L1 28" stroke="#77787d" /><path d="M27 2 8 11v20l19-10z" fill="#fff" fillOpacity="0.3" strokeWidth="2.2" /><path d="M18 17v3l17 9" strokeWidth="2.5" /></> },
  { name: 'Z', icon: <><path d="M18 19 2 28M18 19l17 9" stroke="#77787d" /><path d="M10 12h25l-7 15H2z" fill="#fff" fillOpacity="0.3" strokeWidth="2.2" /><path d="M18 0v19" strokeWidth="2.5" /></> },
]

const Radio = ({ label, checked }: { label: string; checked?: boolean }) => (
  <label className="flex h-[41px] items-center gap-4">
    <input
      type="radio"
      name="mode"
      defaultChecked={checked}
      className="size-[27px] appearance-none rounded-full border border-[#424448] checked:border-8 checked:border-[#1269e0] checked:bg-white"
    />
    {label}
  </label>
)

const action = 'h-[37px] rounded-md bg-linear-to-b from-[#1a80ff] to-[#0850ac] text-[#d8e9ff]'

const RightPanel = () => (
  <aside className="w-[457px] shrink-0 self-start border-b border-l border-[#303136] bg-[#242529] pb-3.5 text-[17px] text-[#e4e4e6]">
    <div className={`mt-0.5 flex h-7 items-center bg-black pr-1 pl-2 text-white ${HEAD}`}>
      <Chevron />
      <h2 className="ml-[19px]">Measure Distance</h2>
      <button className="ml-auto rounded-sm bg-[#3da51b] px-1 font-['Noto_Sans_CJK_SC',sans-serif] leading-[19px] font-normal">
        HELP
      </button>
      <button aria-label="Close" className="ml-3">
        <Icon size="size-3" box="0 0 12 12"><path d="m1.5 1.5 9 9M10.5 1.5l-9 9" strokeWidth="2.8" /></Icon>
      </button>
    </div>
    <div className="px-[9px] pr-1.5">
      <div className="grid grid-cols-4 gap-4 pt-[13px]">
        {modes.map((m) => (
          <button
            key={m.name}
            className={`flex h-[105px] flex-col items-center rounded-md pt-[18px] ${m.name === '3D' ? 'bg-[#1a80ff] text-white' : 'bg-[#303237]'}`}
          >
            <Icon size="size-9" box="0 0 36 36">{m.icon}</Icon>
            <span className="mt-3">{m.name}</span>
          </button>
        ))}
      </div>
      <div className="mt-2.5 flex h-[76px] flex-col items-center rounded-sm bg-[#303237] pt-1.5">
        <span className="leading-7 text-[#7b7c81]">3D distance</span>
        <span className={`text-[26px] leading-9 text-white ${HEAD}`}>13.503 mm</span>
      </div>
      <table className="mt-2.5 w-full table-fixed leading-[22px]">
        <thead className="text-[#7b7c81]">
          <tr className="h-6">
            <td className="w-[102px]" />
            {['X', 'Y', 'Z'].map((a) => (
              <th key={a} scope="col" className="pl-3 font-normal">{a}</th>
            ))}
          </tr>
        </thead>
        <tbody>
          {[['Point 1:', '6.045 mm', '53.078 mm', '1.756 mm'], ['Point 2:', '−0.420 mm', '47.706 mm', '12.323 mm']].map(([p, ...v]) => (
            <tr key={p} className="h-[22px]">
              <th scope="row" className="text-left font-normal text-[#7b7c81]">{p}</th>
              {v.map((n) => (
                <td key={n} className={`text-right whitespace-nowrap text-white ${HEAD}`}>{n}</td>
              ))}
            </tr>
          ))}
        </tbody>
      </table>
      <div className="mt-2.5 border-t border-[#34353a] pt-1">
        <Check label="Add to Scene" checked />
        <Check label="Chain measurements" hint="[Command]" />
        <Check label="Snap to vertex" hint="[Shift]" />
        <Check label="Place point on the surface of a feature" hint="[Option]" checked />
      </div>
    </div>
    <div className="px-1 pr-px pt-1.5"><Section title="Nominal & Tolerance" /></div>
    <div className="px-2.5 pt-[13px] pb-1.5">
      <label className="flex items-center gap-[7px]">
        <span className="flex w-[170px]"><input placeholder="—" className={field} /></span>
        Nominal distance
      </label>
      <div className="mt-3 flex h-[30px] items-center gap-1.5">
        <span className="flex w-[139px]"><input id="tolerance" placeholder="—" className={field} /></span>
        <button className="h-[30px] w-[26px] rounded-md bg-[#36383d]">+/-</button>
        <label htmlFor="tolerance">Tolerance</label>
      </div>
      <p className="mt-[5px] leading-7 text-[#6f7075]">No reference model, unable to guess values.</p>
    </div>
    <div className="px-1 pr-px"><Section title="Subfeatures" /></div>
    <p className="px-[9px] leading-[38px] text-[#6f7075]">Those objects don't have subfeatures.</p>
    <div className="px-1 pr-px"><Section title="Advanced settings" /></div>
    <fieldset className="px-[9px] pt-[5px]">
      <legend className="sr-only">Mode</legend>
      <p className="leading-[27px] text-[#7b7c81]">Mode:</p>
      <Radio label="Simple" />
      <Radio label="Exact (separation distance)" checked />
    </fieldset>
    <div className="grid grid-cols-2 gap-4 px-[9px] pt-[7px] pr-1.5">
      <button className={action}>New Measurement</button>
      <button className={action}>Reset</button>
    </div>
  </aside>
)

export default function App() {
  return (
    <div className={`relative flex h-screen flex-col overflow-hidden bg-[#1e1f24] ${UI}`}>
      <TopBar />
      <Ribbon />
      <Tooltip />
      <div className="relative flex min-h-0 flex-1">
        <LeftPanel />
        <Viewport />
        <RightPanel />
        <Toolbar />
      </div>
    </div>
  )
}
